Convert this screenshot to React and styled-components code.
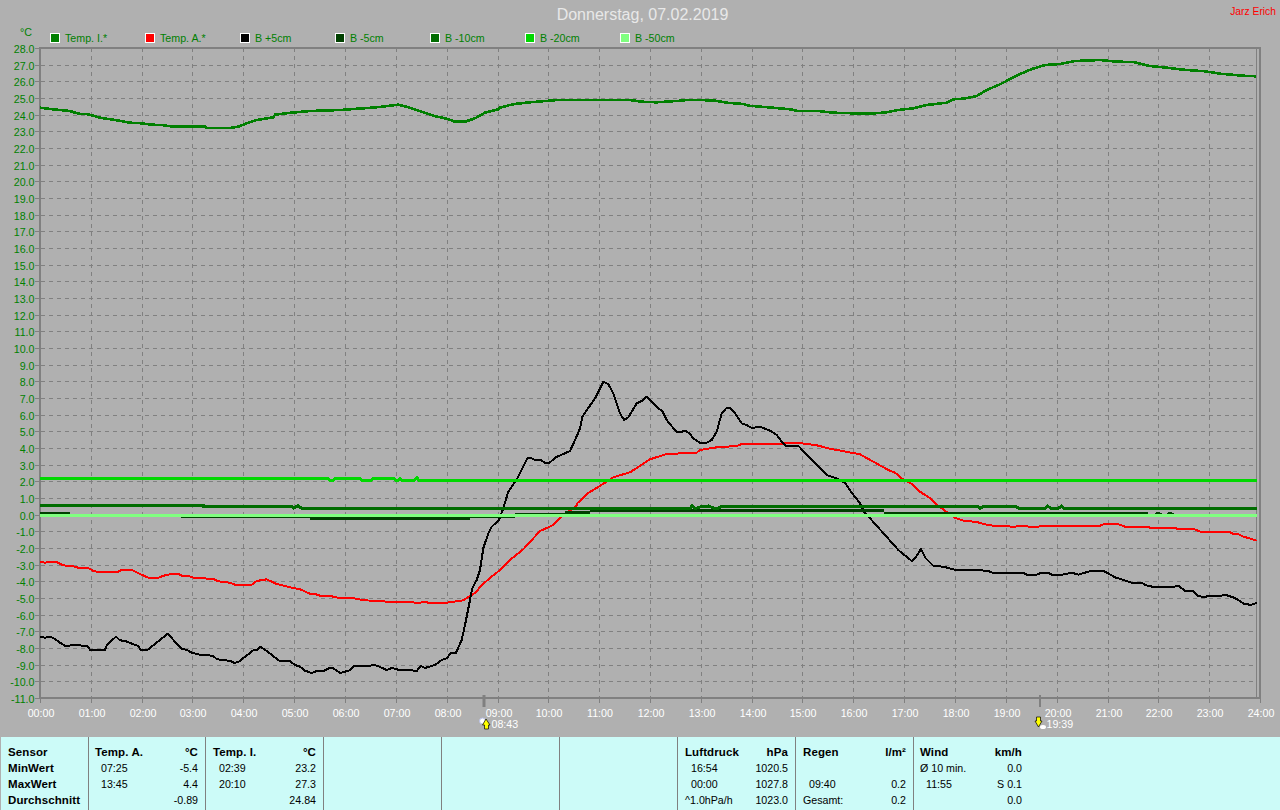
import React from "react";
import styled, { createGlobalStyle } from "styled-components";

const GlobalStyle = createGlobalStyle`
  html, body {
    margin: 0;
    padding: 0;
    background: #b0b0b0;
  }
  body {
    font-family: "Liberation Sans", Arial, sans-serif;
  }
`;

const GRID = "#808080";

// readings were taken off 3x crops, so each run is given in crop coordinates
const crop = (ox, oy, pts) => pts.map(([x, y]) => [ox + x / 3, oy + y / 3]);

const tempInside = [
  ...crop(30, 90, [[30,53],[70,58],[120,63],[145,71],[175,73],[210,83],[250,89],[300,98],[335,100],[365,104],[395,105],[430,110],[525,110],[530,114],[600,114],[625,110],[650,100],[680,90],[730,82],[735,74],[775,69],[840,63],[930,60],[1000,55],[1050,51],[1105,44],[1135,52],[1165,62],[1210,77],[1250,86],[1275,95],[1305,95],[1335,85],[1365,68],[1405,58],[1415,50]]),
  ...crop(500, 50, [[0,173],[30,165],[50,161],[100,156],[135,153],[175,150],[390,150],[425,155],[470,157],[530,153],[560,150],[640,151],[680,158],[730,162],[745,167],[805,172],[870,178],[895,183],[955,183],[1000,188],[1060,190],[1125,190],[1160,187],[1195,180],[1240,175],[1280,165],[1340,158],[1360,148],[1390,146],[1430,138],[1460,120],[1500,103]]),
  [1020,74],[1032,69],[1045,65],[1060,64],[1075,61],[1100,60],[1117,61.7],[1133,62],[1150,66],[1167,67.7],[1183,69.7],[1205,71.3],[1220,73.7],[1243,75.7],[1256,76.3],
];

const tempOutside = [
  ...crop(0, 490, [[120,215],[135,218],[150,216],[170,216],[190,226],[220,229],[235,233],[265,234],[280,243],[300,247],[350,247],[365,240],[395,240],[420,252],[445,263],[475,263],[500,254],[535,251],[545,257],[565,258],[580,263],[640,267],[655,274],[690,278],[705,284],[755,284],[770,273],[800,268],[830,282],[855,288],[880,294],[900,298],[930,311],[945,312],[960,317],[990,318],[1015,323],[1055,324],[1095,331],[1165,335],[1235,336],[1250,340],[1270,336],[1295,339],[1340,338],[1390,331],[1415,315],[1430,305],[1440,290]]),
  [490,578],[500,570],[510,560],
  ...crop(440, 370, [[250,538],[300,483],[340,465],[365,440],[385,425],[408,410],[412,400],[440,372],[500,335],[520,322],[570,307],[630,268],[680,252],[770,248],[780,240],[830,232],[890,228],[905,222],[1085,220],[1130,226],[1170,236],[1260,253]]),
  ...crop(860, 470, [[85,0],[105,8],[125,25],[155,42],[180,65],[215,88],[232,105],[255,122],[285,143],[310,152],[350,156],[375,163],[400,167],[460,170],[490,168],[520,171],[555,168],[720,167],[735,161],[770,161],[795,170],[860,170],[870,173],[945,173],[950,176],[1000,176],[1025,187],[1110,187],[1120,192],[1135,192],[1145,198],[1190,212]]),
];

const soilPlus5 = [
  ...crop(0, 490, [[120,440],[135,443],[150,440],[165,447],[180,458],[195,467],[225,466],[262,467],[270,479],[315,479],[322,463],[348,440],[360,451],[375,453],[415,468],[422,479],[443,479],[503,431],[525,455],[545,477],[560,479],[575,488],[600,494],[638,497],[650,507],[670,511],[690,512],[703,519],[715,516],[760,481],[772,480],[780,470],[800,483],[838,512],[868,512],[885,525],[900,530],[915,542],[935,549],[950,543],[972,542],[990,533],[1000,535],[1020,549],[1050,541],[1063,527],[1110,527],[1125,525],[1140,531],[1160,540],[1175,534],[1195,539],[1225,540],[1250,543],[1262,528],[1275,534],[1305,525],[1325,510],[1340,505],[1352,489],[1368,488],[1385,450],[1395,405],[1410,330],[1417,295],[1430,270],[1440,240]]),
  ...crop(440, 370, [[130,535],[145,490],[155,470],[177,450],[190,415],[205,365],[235,320],[262,265],[275,265],[285,270],[300,269],[315,278],[328,279],[347,262],[370,252],[390,243],[412,195],[420,175],[427,140],[465,85],[490,35],[505,42],[520,70],[540,130],[552,150],[565,142],[590,100],[605,93],[620,80],[635,95],[650,110],[668,125],[680,150],[710,187],[720,187],[735,182],[748,190],[760,205],[780,218],[800,218],[815,210],[830,185],[845,130],[860,113],[870,113],[885,130],[905,160],[920,165],[935,174],[960,170],[990,182],[1010,195],[1025,215],[1037,227],[1075,227],[1110,265],[1130,285],[1160,315],[1190,325],[1215,338],[1235,368],[1260,400]]),
  ...crop(860, 470, [[12,125],[30,145],[75,195],[115,240],[155,273],[165,265],[183,237],[197,265],[220,287],[250,290],[285,299],[350,300],[385,303],[398,308],[490,308],[500,314],[530,314],[545,308],[565,308],[575,314],[605,314],[635,308],[655,314],[675,308],[695,302],[730,302],[765,322],[815,338],[845,338],[855,345],[885,352],[900,350],[935,352],[955,347],[975,362],[1000,362],[1010,376],[1030,382],[1050,377],[1085,377],[1095,374],[1125,384],[1155,403],[1175,404],[1190,399]]),
];

// stepped runs, drawn as separate strokes
const soilMinus5 = [
  [[40,513.5],[70,513.5]],
  [[181,516.5],[310,516.5]],
  [[310,518.5],[470,518.5]],
  [[470,516.5],[515,516.5]],
  [[515,514.5],[565,514.5]],
  [[565,512.5],[590,512.5]],
  [[590,510.5],[884,510.5]],
  [[884,513.5],[1148,513.5]],
  [[1155,515],[1158,513],[1162,515]],
  [[1167,515],[1170,513],[1174,515]],
];

const soilMinus10 = [
  [40,505.5],[203,505.5],[203,506.5],[292,506.5],[293.3,508],[298,505.7],[301.7,508.5],[690,508.5],[692.3,505.7],[695.3,508.5],[701.7,506.5],[708.3,506],[713.3,508],[717.3,508.5],[721.7,506.5],[978,506.5],[980,508.5],[983.3,506.5],[1015,506.5],[1020,508.5],[1045,508.5],[1047.3,506],[1051.7,508.5],[1058.3,508.5],[1061.7,506],[1064,508.5],[1257,508.5],
];

const soilMinus20 = [
  [40,478.5],[328,478.5],[330,480.5],[333,480.5],[335,478.5],[360,478.5],[362,480.5],[371,480.5],[373,478.5],[394,478.5],[396,480.5],[398,480.5],[400,478.5],[402,480.5],[414,480.5],[417,477.5],[419,480.5],[1257,480.5],
];

const soilMinus50 = [[40,515.5],[1257,515.5]];

const hourPixels = [40,91,142,192,243,294,345,396,447,498,548,599,650,701,752,802,853,904,955,1006,1057,1108,1158,1209,1260];
const degrees = Array.from({ length: 40 }, (_, i) => 28 - i);
const yOf = (t) => 48 + (28 - t) * (650 / 39);
const pad = (n) => String(n).padStart(2, "0");
const toPoints = (pts) => pts.map(([x, y]) => `${x.toFixed(1)},${y.toFixed(1)}`).join(" ");

const legend = [
  ["Temp. I.*", "#008000"],
  ["Temp. A.*", "#ff0000"],
  ["B +5cm", "#000000"],
  ["B -5cm", "#004000"],
  ["B -10cm", "#006c00"],
  ["B -20cm", "#00d800"],
  ["B -50cm", "#80ff80"],
];

const columns = [
  {
    inset: true,
    head: ["Temp. A.", "°C"],
    rows: [
      { time: "07:25", value: "-5.4" },
      { time: "13:45", value: "4.4" },
      { value: "-0.89" },
    ],
  },
  {
    head: ["Temp. I.", "°C"],
    rows: [
      { time: "02:39", value: "23.2" },
      { time: "20:10", value: "27.3" },
      { value: "24.84" },
    ],
  },
  { rows: [] },
  { rows: [] },
  { rows: [] },
  {
    head: ["Luftdruck", "hPa"],
    rows: [
      { time: "16:54", value: "1020.5" },
      { time: "00:00", value: "1027.8" },
      { label: "^1.0hPa/h", value: "1023.0" },
    ],
  },
  {
    head: ["Regen", "l/m²"],
    rows: [
      {},
      { time: "09:40", value: "0.2" },
      { label: "Gesamt:", value: "0.2" },
    ],
  },
  {
    inset: true,
    open: true,
    head: ["Wind", "km/h"],
    rows: [
      { label: "Ø 10 min.", value: "0.0" },
      { time: "11:55", value: "S 0.1" },
      { value: "0.0" },
    ],
  },
];

const Page = styled.div`
  width: 1280px;
  height: 810px;
  overflow: hidden;
  background: #b0b0b0;
`;

const TitleBar = styled.header`
  display: grid;
  grid-template-columns: 1fr auto 1fr;
  height: 24px;
  padding: 0 4px 0 9px;
`;

const Title = styled.h1`
  grid-column: 2;
  margin: 6px 0 0;
  font-size: 16px;
  line-height: 18px;
  font-weight: 400;
  color: #e8e8e8;
`;

const Author = styled.span`
  grid-column: 3;
  justify-self: end;
  margin-top: 5px;
  font-size: 10.3px;
  line-height: 14px;
  color: #ff0000;
`;

const LegendRow = styled.div`
  display: flex;
  height: 20px;
`;

const Unit = styled.span`
  width: 50px;
  padding: 2px 0 0 20px;
  box-sizing: border-box;
  font-size: 10.67px;
  line-height: 12px;
  color: #008000;
`;

const LegendItem = styled.span`
  display: flex;
  align-items: center;
  width: 95px;
  height: 20px;
  margin-top: 4px;
  gap: 5px;
  font-size: 10.67px;
  color: #008000;
`;

const Swatch = styled.i`
  width: 8px;
  height: 8px;
  border: 1px solid #ffffff;
  background: ${(p) => p.$color};
`;

const ChartSvg = styled.svg`
  display: block;
  width: 1280px;
  height: 693px;
`;

const Label = styled.text`
  font-family: "Liberation Sans", Arial, sans-serif;
  font-size: 10.67px;
  fill: ${(p) => p.$fill};
`;

const StatsPanel = styled.section`
  display: grid;
  grid-template-columns: 87px 117px repeat(6, 118px) 1fr;
  height: 73px;
  margin-left: 1px;
  background: #ccfbf8;
  color: #000000;
  font-size: 10.67px;
`;

const StatsColumn = styled.div`
  display: grid;
  grid-auto-rows: 16px;
  align-content: start;
  width: ${(p) => (p.$open ? "116px" : "auto")};
  padding: 7px 7px 0 ${(p) => (p.$inset ? "6px" : "7px")};
  box-sizing: border-box;
  border-left: ${(p) => (p.$first ? "none" : `1px solid ${GRID}`)};
`;

const StatsRow = styled.div`
  display: flex;
  justify-content: space-between;
  align-items: center;
  white-space: nowrap;
`;

const HeadCell = styled.span`
  font-weight: 700;
  font-size: 11.5px;
  letter-spacing: 0.1px;
`;

const Time = styled.span`
  padding-left: 6px;
`;

const series = (points, color, width) => (
  <polyline points={toPoints(points)} fill="none" stroke={color} strokeWidth={width} />
);

function SunMarkers() {
  return (
    <g>
      <rect x="482.5" y="695" width="3" height="12" fill={GRID} />
      <rect x="1039" y="695" width="2" height="12" fill={GRID} />
      <circle cx="482.5" cy="721" r="3" fill="#ffffff" stroke="#b8c0e8" strokeWidth="1" />
      <polygon points="486,719 490,725 488.5,725 488.5,729 484.5,729 484.5,725 482.5,725" fill="#ffff00" stroke="#000000" strokeWidth="0.7" />
      <polygon points="1038.5,727 1042,721 1040.5,721 1040.5,717 1036.5,717 1036.5,721 1035,721" fill="#ffff00" stroke="#000000" strokeWidth="0.7" />
      <ellipse cx="1043" cy="727" rx="3" ry="2" fill="#ffffff" />
      <Label x="491.5" y="728" $fill="#ffffff">08:43</Label>
      <Label x="1046.5" y="728" $fill="#ffffff">19:39</Label>
    </g>
  );
}

function Chart() {
  return (
    <ChartSvg viewBox="0 44 1280 693">
      <g shapeRendering="crispEdges">
        {degrees.slice(1, -1).map((t) => (
          <line key={t} x1="41" x2="1257" y1={Math.round(yOf(t)) + 0.5} y2={Math.round(yOf(t)) + 0.5} stroke={GRID} strokeDasharray="4 4" />
        ))}
        {hourPixels.slice(1, -1).map((x) => (
          <g key={x}>
            <line x1={x + 0.5} x2={x + 0.5} y1="48" y2="697" stroke={GRID} strokeDasharray="4 4" />
            <line x1={x + 0.5} x2={x + 0.5} y1="697" y2="703" stroke={GRID} />
          </g>
        ))}
        {degrees.map((t) => (
          <line key={t} x1="35" x2="40" y1={Math.round(yOf(t)) + 0.5} y2={Math.round(yOf(t)) + 0.5} stroke={GRID} />
        ))}
        <line x1="40.5" x2="40.5" y1="698" y2="703" stroke={GRID} />
        <line x1="1260" x2="1260" y1="698" y2="703" stroke={GRID} />
        <line x1="1256.5" x2="1256.5" y1="48" y2="698" stroke={GRID} />
        <rect x="39" y="47" width="2" height="652" fill={GRID} />
        <rect x="39" y="47" width="1222" height="2" fill={GRID} />
        <rect x="39" y="697" width="1222" height="2" fill={GRID} />
        <rect x="1259" y="47" width="2" height="652" fill={GRID} />

        {series(tempInside, "#008000", 2.6)}
        {series(tempOutside, "#ff0000", 2)}
        {series(soilPlus5, "#000000", 2)}
        {soilMinus5.map((run, i) => (
          <polyline key={i} points={toPoints(run)} fill="none" stroke="#004000" strokeWidth="3" />
        ))}
        {series(soilMinus10, "#006c00", 3)}
        {series(soilMinus20, "#00d800", 3)}
        {series(soilMinus50, "#80ff80", 3)}
      </g>

      {degrees.map((t) => (
        <Label key={t} x="34.5" y={Math.round(yOf(t)) + 4.5} textAnchor="end" $fill="#008000">
          {t.toFixed(1)}
        </Label>
      ))}
      {hourPixels.map((x, h) => (
        <Label key={h} x={x + 1} y="717" textAnchor="middle" $fill="#ffffff">
          {pad(h)}:00
        </Label>
      ))}
      <SunMarkers />
    </ChartSvg>
  );
}

const sensorRows = ["Sensor", "MinWert", "MaxWert", "Durchschnitt"];

function Stats() {
  return (
    <StatsPanel>
      <StatsColumn $first>
        {sensorRows.map((name) => (
          <StatsRow key={name}>
            <HeadCell>{name}</HeadCell>
          </StatsRow>
        ))}
      </StatsColumn>
      {columns.map((col, i) => (
        <StatsColumn key={i} $open={col.open} $inset={col.inset}>
          {col.head && (
            <StatsRow>
              <HeadCell>{col.head[0]}</HeadCell>
              <HeadCell>{col.head[1]}</HeadCell>
            </StatsRow>
          )}
          {col.rows.map((row, j) => (
            <StatsRow key={j}>
              {row.time ? <Time>{row.time}</Time> : <span>{row.label}</span>}
              <span>{row.value}</span>
            </StatsRow>
          ))}
        </StatsColumn>
      ))}
    </StatsPanel>
  );
}

export default function App() {
  return (
    <Page>
      <GlobalStyle />
      <TitleBar>
        <Title>Donnerstag, 07.02.2019</Title>
        <Author>Jarz Erich</Author>
      </TitleBar>
      <LegendRow>
        <Unit>°C</Unit>
        {legend.map(([name, color]) => (
          <LegendItem key={name}>
            <Swatch $color={color} />
            {name}
          </LegendItem>
        ))}
      </LegendRow>
      <Chart />
      <Stats />
    </Page>
  );
}
